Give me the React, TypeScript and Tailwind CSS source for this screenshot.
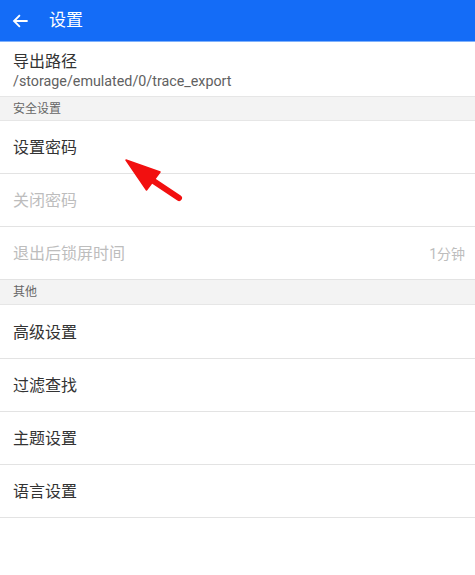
import React from "react";

const font = { fontFamily: 'Roboto, "Noto Sans CJK SC", sans-serif' };

function Row({ label, disabled, value, tall }: { label: string; disabled?: boolean; value?: string; tall?: boolean }) {
  return (
    <div className={`${tall ? "h-[54px]" : "h-[53px]"} flex items-center justify-between px-[13px] pt-[2px] border-b border-[#e3e3e3] bg-white`}>
      <span className={`text-[16px] ${disabled ? "text-[#bdbdbd]" : "text-[#333333]"}`}>{label}</span>
      {value && <span className="text-[14px] text-[#bdbdbd] mr-[-3px]">{value}</span>}
    </div>
  );
}

function Section({ label, tall }: { label: string; tall?: boolean }) {
  return (
    <div className={`${tall ? "h-[25px]" : "h-[24px]"} flex items-center px-[13px] bg-[#f3f3f3] border-b border-[#e6e6e6] text-[12px] text-[#666666]`}>
      {label}
    </div>
  );
}

export default function App() {
  return (
    <div className="w-[475px] h-[575px] bg-white relative overflow-hidden" style={font}>
      <div className="h-[42px] bg-[#146cf7] flex items-center border-b border-[#7fb1fb]">
        <svg className="ml-[11px]" width="18" height="18" viewBox="0 0 24 24" fill="none" stroke="white" strokeWidth="2.4" strokeLinecap="square">
          <path d="M21 12H4.5M11 5l-7 7 7 7" />
        </svg>
        <span className="ml-[20px] text-white text-[17px]">设置</span>
      </div>
      <div className="h-[55px] flex flex-col justify-center px-[13px] pt-[3px] border-b border-[#e6e6e6]">
        <span className="text-[16px] text-[#333333] leading-[20px]">导出路径</span>
        <span className="text-[14.3px] text-[#616161] leading-[18px]">/storage/emulated/0/trace_export</span>
      </div>
      <Section label="安全设置" />
      <Row label="设置密码" />
      <Row label="关闭密码" disabled />
      <Row label="退出后锁屏时间" disabled value="1分钟" />
      <Section label="其他" tall />
      <Row label="高级设置" tall />
      <Row label="过滤查找" />
      <Row label="主题设置" />
      <Row label="语言设置" />
      <svg className="absolute left-0 top-0" width="475" height="575" viewBox="0 0 475 575">
        <line x1="152" y1="180" x2="179" y2="198" stroke="#f21010" strokeWidth="6" strokeLinecap="round" />
        <polygon points="126,160 160,172 146.5,190" fill="#f21010" stroke="#f21010" strokeWidth="1.5" strokeLinejoin="round" />
      </svg>
    </div>
  );
}
